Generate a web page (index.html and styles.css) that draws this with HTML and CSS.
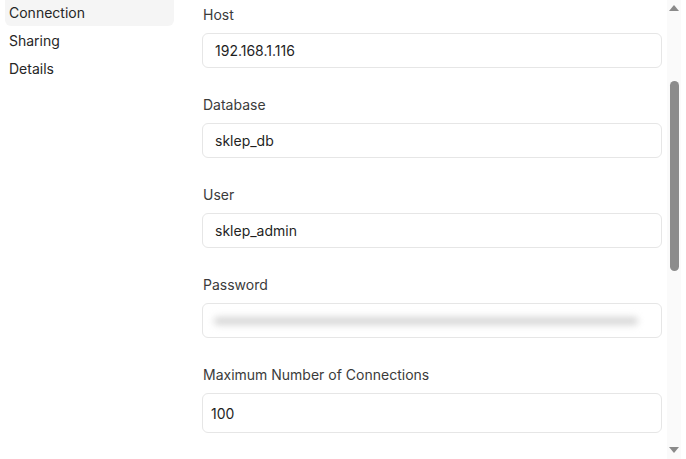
FILE: index.html
```html
<!DOCTYPE html>
<html lang="en">
  <head>
    <meta charset="UTF-8" />
    <meta name="viewport" content="width=device-width, initial-scale=1.0" />
    <title>Connection settings</title>
    <link rel="stylesheet" href="styles.css">
  </head>

  <body>
    <!-- Side menu -->
    <ul class="menu">
      <li class="menu-item active">Connection</li>
      <li class="menu-item">Sharing</li>
      <li class="menu-item">Details</li>
    </ul>

    <!-- Form -->
    <div class="form">
      <div class="field">
        <label class="label">Host</label>
        <div class="input">192.168.1.116</div>
      </div>
      <div class="field">
        <label class="label">Database</label>
        <div class="input">sklep_db</div>
      </div>
      <div class="field">
        <label class="label">User</label>
        <div class="input">sklep_admin</div>
      </div>
      <div class="field">
        <label class="label">Password</label>
        <div class="input"><div class="blurred"></div></div>
      </div>
      <div class="field">
        <label class="label">Maximum Number of Connections</label>
        <div class="input short">100</div>
      </div>
    </div>

    <!-- Scrollbar -->
    <div class="scrollbar">
      <div class="arrow up"></div>
      <div class="track">
        <div class="thumb"></div>
      </div>
      <div class="arrow down"></div>
    </div>
  </body>
</html>
```

FILE: styles.css
```css
html,
body {
  height: 100%;
}

body {
  margin: 0;
  display: flex;
  overflow: hidden;
  background: #fff;
  font-family: Inter, "Noto Sans", sans-serif;
  font-size: 14px;
  color: #2b2b2b;
}

.menu {
  list-style: none;
  margin: 0;
  padding: 0 0 0 5px;
  width: 169px;
  display: flex;
  flex-direction: column;
  gap: 2px;
}

.menu-item {
  height: 26px;
  line-height: 26px;
  padding-left: 4px;
  border-radius: 0 0 6px 6px;
  color: #262626;
}

.menu-item.active {
  background-color: #f5f5f5;
}

.form {
  margin-left: 28px;
  width: 460px;
  padding-top: 5px;
  display: flex;
  flex-direction: column;
  gap: 27px;
}

.label {
  display: block;
  height: 20px;
  line-height: 20px;
  margin-bottom: 8px;
  padding-left: 1px;
  color: #3b3b3b;
}

.input {
  box-sizing: border-box;
  height: 35px;
  padding: 0 12px;
  display: flex;
  align-items: center;
  border: 1px solid #e6e6e6;
  border-radius: 6px;
  color: #1f1f1f;
}

.input.short {
  padding-left: 8px;
  height: 40px;
}

.blurred {
  height: 8px;
  width: 424px;
  margin-left: -1px;
  background-color: #d6d6d6;
  border-radius: 4px;
  filter: blur(3.5px);
}

.scrollbar {
  margin-left: 5px;
  width: 14px;
  background-color: #fafafa;
  display: flex;
  flex-direction: column;
  align-items: center;
}

.arrow {
  width: 0;
  height: 0;
  border-left: 5px solid transparent;
  border-right: 5px solid transparent;
}

.arrow.up {
  margin-top: 5px;
  border-bottom: 6px solid #8a8a8a;
}

.arrow.down {
  margin-bottom: 6px;
  border-top: 6px solid #8a8a8a;
}

.track {
  flex: 1;
  width: 100%;
  display: flex;
  justify-content: center;
}

.thumb {
  margin-top: 70px;
  width: 9px;
  height: 190px;
  border-radius: 5px;
  background-color: #8c8c8c;
}
```
